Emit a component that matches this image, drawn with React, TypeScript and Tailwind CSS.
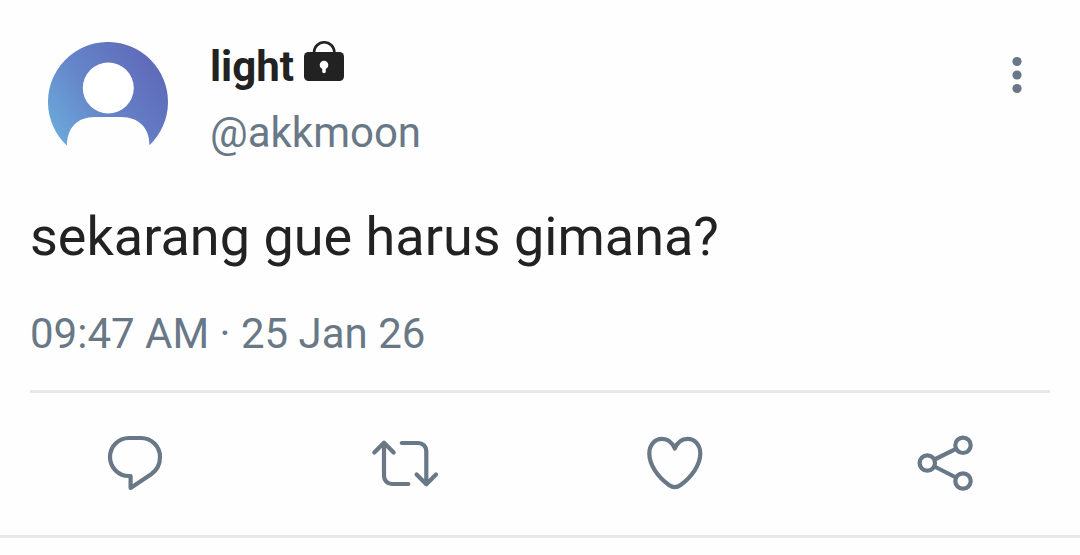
import type { ReactNode } from "react";

function Avatar() {
  return (
    <svg viewBox="0 0 120 120" className="size-[120px] shrink-0" role="img" aria-label="Profile picture">
      <defs>
        <linearGradient id="avatar-fill" gradientUnits="userSpaceOnUse" x1="0" y1="98" x2="104" y2="26">
          <stop offset="0" stopColor="#6caddd" />
          <stop offset="0.5" stopColor="#6585c9" />
          <stop offset="1" stopColor="#606cba" />
        </linearGradient>
      </defs>
      <path d="M19 103.800A60 60 0 1 1 101.500 103.300C101.500 86 91 75 73 75H47C29 75 19 86 19 103.800Z" fill="url(#avatar-fill)" />
      <circle cx="60.300" cy="46" r="25.500" fill="#fff" />
    </svg>
  );
}

function LockIcon() {
  return (
    <svg viewBox="0 0 40 40" className="size-10" role="img" aria-label="Protected account">
      <path d="M10 13V11.500A10.200 10.200 0 0 1 30.400 11.500V13" fill="none" stroke="#222222" strokeWidth="2.6" />
      <rect y="11" width="40" height="29" rx="4.500" fill="#222222" />
      <circle cx="20" cy="24" r="4.300" fill="#fff" />
      <path d="M18.200 25H21.800V30.500A1.800 1.800 0 0 1 18.200 30.500Z" fill="#fff" />
    </svg>
  );
}

const stroke = {
  fill: "none",
  stroke: "currentColor",
  strokeWidth: 4.2,
} as const;

function ReplyIcon() {
  return (
    <svg viewBox="0 0 60 60" className="size-[60px]" {...stroke} strokeLinejoin="round">
      <path d="M24 5A19 19 0 0 0 24 43H25.600V55L46.500 41C52 37 55 31 55 24A19 19 0 0 0 36 5Z" />
    </svg>
  );
}

function RepostIcon() {
  return (
    <svg viewBox="0 0 72 60" className="h-[60px] w-[72px]" {...stroke} strokeLinecap="round" strokeLinejoin="round">
      <path d="M5.300 19.500L15 9.800L24.700 19.500M15 10V43A8 8 0 0 0 23 51H39.300" />
      <path d="M32.800 10H49.300A8 8 0 0 1 57.300 18V51M47.600 41.500L57.300 51.200L67 41.500" />
    </svg>
  );
}

function LikeIcon() {
  return (
    <svg viewBox="0 0 60 60" className="size-[60px]" {...stroke} strokeLinejoin="round">
      <path d="M29.800 15.500C27 9 22.500 5.900 17 5.900C9.500 5.900 4.300 12 4.300 20.500C4.300 32 13 44 24 52Q29.800 56.200 35.600 52C46.500 44 55.300 32 55.300 20.500C55.300 12 50 5.900 42.600 5.900C37 5.900 32.500 9 29.800 15.500Z" />
    </svg>
  );
}

function ShareIcon() {
  return (
    <svg viewBox="0 0 60 60" className="size-[60px]" {...stroke}>
      <circle cx="12.300" cy="30" r="7.700" />
      <circle cx="48" cy="12.300" r="7.700" />
      <circle cx="48" cy="48" r="7.700" />
      <path d="M19.500 26.500L41 15.800M19.500 33.500L41 44.500" />
    </svg>
  );
}

const actions: { label: string; icon: ReactNode }[] = [
  { label: "Reply", icon: <ReplyIcon /> },
  { label: "Repost", icon: <RepostIcon /> },
  { label: "Like", icon: <LikeIcon /> },
  { label: "Share", icon: <ShareIcon /> },
];

export default function App() {
  return (
    <main className="min-h-screen bg-[#fefefe] font-['Roboto',sans-serif] text-[#222222]">
      <article className="border-b-3 border-[#e8e8e8]">
        <header className="flex items-start pt-[34px] pr-[45px] pl-12">
          <div className="pt-2">
            <Avatar />
          </div>
          <div className="min-w-0 flex-1 pl-[42px] text-[42px] leading-[66px]">
            <h1 className="flex items-baseline gap-[10px] font-bold">
              light
              <LockIcon />
            </h1>
            <a href="#akkmoon" className="block text-[#687886]">
              @akkmoon
            </a>
          </div>
          <button type="button" aria-label="More options" className="mt-[17px] text-[#687886]">
            <svg viewBox="0 0 36 48" className="h-12 w-9" fill="currentColor">
              <circle cx="18" cy="10.500" r="4.600" />
              <circle cx="18" cy="24" r="4.600" />
              <circle cx="18" cy="37.500" r="4.600" />
            </svg>
          </button>
        </header>
        <p className="px-[30px] pt-[35px] text-[54px] leading-[72px]">sekarang gue harus gimana?</p>
        <div className="px-[30px] pt-[37px]">
          <time dateTime="2026-01-25T09:47" className="block border-b-3 border-[#e8e8e8] pb-8 text-[42px] leading-[48px] text-[#687886]">
            09:47 AM · 25 Jan 26
          </time>
        </div>
        <div className="grid grid-cols-4 pt-10 pb-[42px] text-[#687886]">
          {actions.map(({ label, icon }) => (
            <button key={label} type="button" aria-label={label} className="justify-self-center">
              {icon}
            </button>
          ))}
        </div>
      </article>
    </main>
  );
}
